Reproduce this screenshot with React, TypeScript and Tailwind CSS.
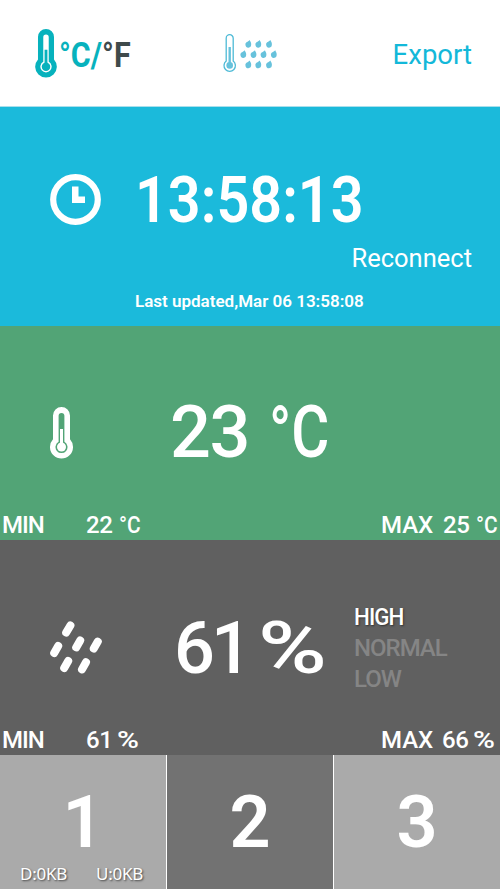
import clsx from "clsx";

interface ThermometerProps {
  className?: string;
}

function Thermometer({ className }: ThermometerProps) {
  return (
    <svg className={className} viewBox="0 0 23 52" fill="none">
      <path
        fill="currentColor"
        fillRule="evenodd"
        d="M3 8.5a8.5 8.5 0 0 1 17 0v23.8a11.5 11.5 0 1 1-17 0zM8.6 8.8v26a6 6 0 1 0 5.8 0v-26a2.9 2.9 0 0 0-5.8 0z"
      />
      <path d="M11.5 22v18" stroke="currentColor" strokeWidth="3" />
      <circle cx="11.5" cy="40" r="4.5" fill="currentColor" />
    </svg>
  );
}

function HumidityIcon() {
  const drops = [
    [25.3, 7], [35.3, 7], [46, 7],
    [20.3, 17.3], [30.5, 17.3], [40.5, 17.3], [50.8, 17.3],
    [25.3, 27.6], [35.3, 27.6], [46, 27.6],
  ];
  return (
    <svg className="h-[38px] w-[54px]" viewBox="0 0 54 38" fill="none">
      <path
        d="M3.2 4.2a3.5 3.5 0 0 1 7 0v22.9a5.7 5.7 0 1 1-7 0z"
        stroke="#4dbad6"
        strokeWidth="1.3"
      />
      <path d="M6.7 13v18" stroke="#67c2dc" strokeWidth="2.4" />
      <circle cx="6.7" cy="31.4" r="3.3" fill="#67c2dc" />
      {drops.map(([x, y]) => (
        <path
          key={`${x}-${y}`}
          d={`M${x + 1.5} ${y - 1}c.2 1.2 1.4 2.2 1.4 4a2.9 3.5 0 0 1-5.8 0.3c0-2.3 3.1-2.7 4.4-4.3z`}
          fill="#67c2dc"
        />
      ))}
    </svg>
  );
}

function ClockIcon() {
  return (
    <svg className="h-[51px] w-[51px]" viewBox="0 0 51 51" fill="none">
      <circle cx="25.5" cy="25.5" r="22.3" stroke="white" strokeWidth="6.2" />
      <path d="M22 12.5h6.5v10H35V29H22z" fill="white" />
    </svg>
  );
}

function RainIcon() {
  return (
    <svg className="mb-[2px] h-[54px] w-[52px]" viewBox="0 0 52 54" stroke="white" strokeWidth="8" strokeLinecap="round">
      <path d="M20.4 4.4 16.2 11.6M30.2 19.4 26.2 26.4M47.8 20.6 43.8 27.6M8.2 25 4.2 32M18.2 40 14.2 47M36 41.2 32 48.4" />
    </svg>
  );
}

interface RangeRowProps {
  min: number;
  max: number;
  unit: string;
  unitClass: string;
  maxClass: string;
}

function RangeRow({ min, max, unit, unitClass, maxClass }: RangeRowProps) {
  return (
    <div className="flex h-[30px] items-center pl-[2px] text-[24px] font-medium leading-[30px]">
      <span className="w-[84px] tracking-[-1px]">MIN</span>
      <span className="w-[28px] tracking-[-0.5px]">{min}</span>
      <span className={unitClass}>{unit}</span>
      <span className={maxClass}>MAX</span>
      <span className="w-[28px] tracking-[-0.5px]">{max}</span>
      <span className={unitClass}>{unit}</span>
    </div>
  );
}

const levels = ["HIGH", "NORMAL", "LOW"];

export default function App() {
  const level = "HIGH";

  return (
    <div className="flex h-[889px] w-[500px] flex-col overflow-hidden whitespace-nowrap bg-white font-['Roboto','Noto_Sans',sans-serif] text-white">
      <header className="flex h-[107px] items-center border-b border-[#a9dfec] pr-7">
        <div className="flex w-[223px] items-center pl-[35px] text-[#07b2bd]">
          <Thermometer className="h-[49px] w-[22px]" />
          <div className="ml-[2px] mt-[6px] flex w-[100px] origin-left scale-x-[0.87] text-[35px] font-bold leading-10">
            <span>°C/</span>
            <span className="text-[#3f4a4b]">°F</span>
          </div>
        </div>
        <HumidityIcon />
        <button className="ml-auto mt-[3px] text-[27.5px] leading-8 text-[#13b8d9]">Export</button>
      </header>

      <section className="flex h-[219px] flex-col bg-[#1bbadb] pt-[67px]">
        <div className="flex h-[51px] items-center pl-[50px]">
          <ClockIcon />
          <span className="ml-[34px] mt-[2px] origin-left scale-x-[0.885] text-[65px] font-semibold leading-[51px]">
            13:58:13
          </span>
        </div>
        <button className="mr-7 mt-[17px] self-end text-[25.5px] leading-8">Reconnect</button>
        <p className="ml-[135px] mt-[15px] text-[17px] font-semibold leading-6">Last updated,Mar 06 13:58:08</p>
      </section>

      <section className="flex h-[214px] flex-col bg-[#52a476] pt-[80px]">
        <div className="flex h-[53px] items-center pl-[50px] text-[72px] font-medium leading-[52px]">
          <Thermometer className="h-[52px] w-[23px]" />
          <span className="ml-[97px] mt-[1px] w-[99px] tracking-[-1.5px]">23</span>
          <span className="mt-[1px] origin-left scale-x-[0.81]">°C</span>
        </div>
        <div className="mt-auto">
          <RangeRow min={22} max={25} unit="°C" unitClass="ml-[5px] w-[24px] origin-left scale-x-[0.87]" maxClass="ml-auto w-[62px]" />
        </div>
      </section>

      <section className="flex h-[215px] flex-col bg-[#606060] pt-[62px]">
        <div className="flex h-[93px] items-center pl-[50px]">
          <RainIcon />
          <div className="ml-[72px] mt-[1px] flex w-[180px] text-[72px] font-medium leading-[52px]">
            <span className="w-[84px] tracking-[-4px]">61</span>
            <span className="origin-left scale-x-[1.3]">%</span>
          </div>
          <ul className="text-[24px] font-medium leading-[31px]">
            {levels.map((name) => (
              <li
                key={name}
                className={clsx(
                  "origin-left tracking-[-1px]",
                  name === level ? "scale-x-[0.93] text-white [text-shadow:1px_1px_2px_#333]" : "text-[#858585]",
                )}
              >
                {name}
              </li>
            ))}
          </ul>
        </div>
        <div className="mt-auto">
          <RangeRow min={61} max={66} unit="%" unitClass="ml-[3px] w-[27px] origin-left scale-x-[1.24]" maxClass="ml-auto w-[61px]" />
        </div>
      </section>

      <nav className="grid h-[134px] grid-cols-[167px_167px_166px] text-[72px] font-semibold leading-[134px]">
        <button className="flex flex-col border-r border-white bg-[#aaaaaa]">
          <span className="h-[110px] w-full pt-px text-center">1</span>
          <span className="-mt-[3px] flex gap-[29px] pl-5 font-['Noto_Sans',sans-serif] text-[17px] font-normal leading-6 tracking-[-0.25px] [text-shadow:1px_1px_2px_#444]">
            <span>D:0KB</span>
            <span>U:0KB</span>
          </span>
        </button>
        <button className="border-r border-white bg-[#727272] pt-px">2</button>
        <button className="bg-[#aaaaaa] pt-px">3</button>
      </nav>
    </div>
  );
}
